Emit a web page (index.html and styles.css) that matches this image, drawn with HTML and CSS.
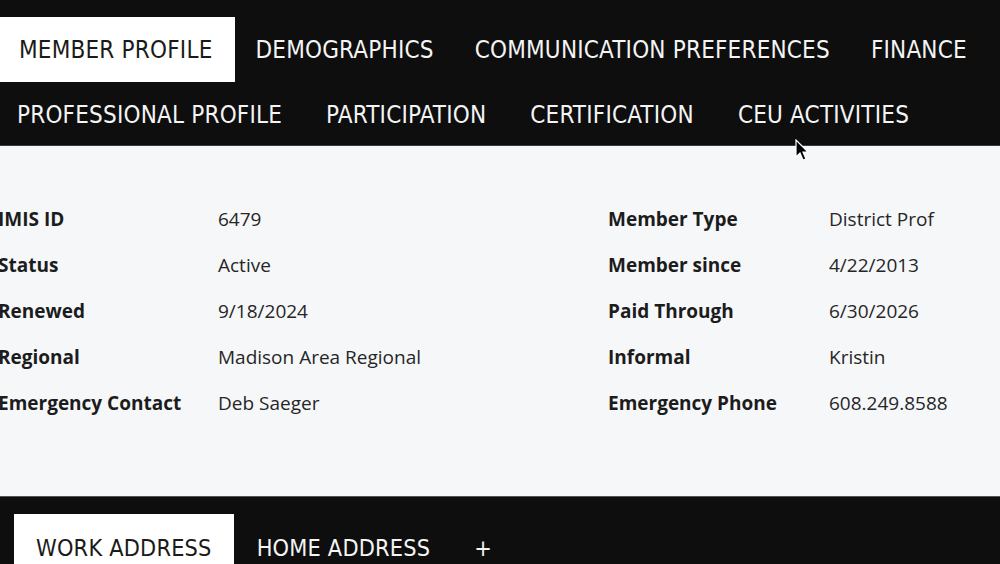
FILE: index.html
```html
<!DOCTYPE html>
<html lang="en">
<head>
  <meta charset="UTF-8">
  <meta name="viewport" content="width=device-width, initial-scale=1.0">
  <title>Member Profile</title>
  <link rel="stylesheet" href="styles.css">
</head>
<body>
  <!-- Main tabs -->
  <nav class="tabs">
    <div class="tab-row">
      <a href="#" class="tab active">Member Profile</a>
      <a href="#" class="tab">Demographics</a>
      <a href="#" class="tab">Communication Preferences</a>
      <a href="#" class="tab">Finance</a>
    </div>
    <div class="tab-row second">
      <a href="#" class="tab">Professional Profile</a>
      <a href="#" class="tab">Participation</a>
      <a href="#" class="tab">Certification</a>
      <a href="#" class="tab">CEU Activities</a>
    </div>
  </nav>

  <section class="details">
    <div class="label">IMIS ID</div>
    <div class="value">6479</div>
    <div class="label">Member Type</div>
    <div class="value">District Prof</div>

    <div class="label">Status</div>
    <div class="value">Active</div>
    <div class="label">Member since</div>
    <div class="value">4/22/2013</div>

    <div class="label">Renewed</div>
    <div class="value">9/18/2024</div>
    <div class="label">Paid Through</div>
    <div class="value">6/30/2026</div>

    <div class="label">Regional</div>
    <div class="value">Madison Area Regional</div>
    <div class="label">Informal</div>
    <div class="value">Kristin</div>

    <div class="label">Emergency Contact</div>
    <div class="value">Deb Saeger</div>
    <div class="label">Emergency Phone</div>
    <div class="value">608.249.8588</div>
  </section>

  <!-- Address tabs -->
  <nav class="tabs address-tabs">
    <div class="tab-row">
      <a href="#" class="tab active">Work Address</a>
      <a href="#" class="tab">Home Address</a>
      <a href="#" class="tab">+</a>
    </div>
  </nav>

  <svg class="cursor" width="16" height="24" viewBox="0 0 16 24">
    <path d="M1 1 L1 18 L5 14 L8 21 L11 20 L8 13 L13 13 Z" fill="#000" stroke="#fff" stroke-width="1.2"/>
  </svg>
</body>
</html>
```

FILE: styles.css
```css
body {
  margin: 0;
  padding: 0;
  height: 564px;
  background-color: #f6f7f9;
  font-family: "Open Sans", Lato, sans-serif;
  color: #1f1f1f;
  overflow: hidden;
  position: relative;
}

.tabs {
  background-color: #0e0e0e;
  padding-top: 17px;
  border-bottom: 1px solid #3a3a3a;
}

.tab-row {
  display: flex;
  gap: 1px;
}

.tab-row.second {
  margin-left: -2px;
  gap: 4px;
}

.tab {
  display: block;
  height: 65px;
  line-height: 66px;
  padding: 0 21px 0 19px;
  font-family: "DejaVu Sans Condensed", "DejaVu Sans", sans-serif;
  font-stretch: condensed;
  font-size: 24px;
  letter-spacing: 0.2px;
  text-transform: uppercase;
  text-decoration: none;
  color: #f4f4f4;
}

.tab-row.second .tab {
  height: 63px;
  line-height: 67px;
}

.tab.active {
  background-color: #fff;
  color: #1a1a1a;
  padding-right: 23px;
}

.details {
  display: grid;
  grid-template-columns: 220px 390px 221px auto;
  grid-auto-rows: 46px;
  align-items: center;
  margin-left: -2px;
  padding: 50px 0 70px;
  font-size: 19px;
}

.label {
  font-weight: 700;
  color: #1c1c1c;
}

.value {
  color: #262626;
}

.address-tabs {
  border-bottom: none;
  border-top: 1px solid #555;
  padding-left: 14px;
  height: 67px;
}

.address-tabs .tab {
  height: 66px;
  line-height: 68px;
  padding: 0 21px 0 22px;
  font-size: 23.3px;
}

.address-tabs .tab.active {
  padding-right: 22px;
}

.cursor {
  position: absolute;
  top: 139px;
  left: 795px;
}
```
